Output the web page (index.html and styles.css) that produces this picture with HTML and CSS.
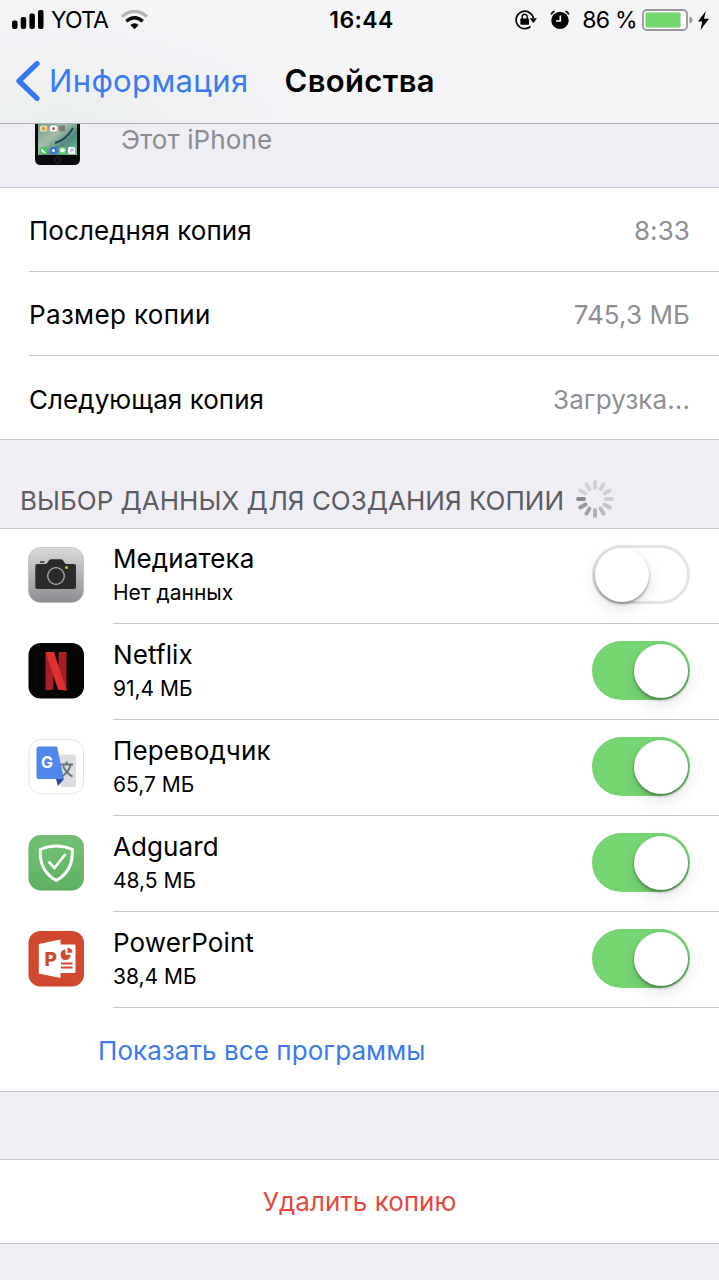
FILE: index.html
```html
<!DOCTYPE html>
<html lang="ru">
<head>
  <meta charset="UTF-8">
  <meta name="viewport" content="width=device-width, initial-scale=1.0">
  <title>Свойства</title>
  <link rel="stylesheet" href="styles.css">
</head>
<body>

<header class="top">
  <div class="status-bar">
    <div class="status-left">
      <svg class="signal" width="32" height="20" viewBox="0 0 32 20">
        <rect x="0" y="10.500" width="5.500" height="8.500" rx="2"/>
        <rect x="8.700" y="7" width="5.500" height="12" rx="2"/>
        <rect x="17.400" y="3.500" width="5.500" height="15.500" rx="2"/>
        <rect x="26" y="0" width="5.500" height="19" rx="2"/>
      </svg>
      <span class="carrier">YOTA</span>
      <svg class="wifi" width="27" height="20" viewBox="0 0 27 20">
        <path d="M1 6.500Q13.500 -4 26 6.500" fill="none" stroke="#b4b4b6" stroke-width="3.200"/>
        <path d="M5.300 11.300Q13.500 4.300 21.700 11.300" fill="none" stroke="#000" stroke-width="3.400"/>
        <path d="M9.300 15Q13.500 11.700 17.700 15L13.500 19.300Z"/>
      </svg>
    </div>
    <span class="clock">16:44</span>
    <div class="status-right">
      <svg class="lock" width="22" height="20" viewBox="0 0 22 20">
        <path d="M15.500 16.500A8.700 8.700 0 1 1 18.400 8.500" fill="none" stroke="#000" stroke-width="1.700"/>
        <path d="M14.700 8.300H22L18.400 13Z"/>
        <rect x="5.400" y="8.500" width="8.600" height="6.300" rx=".8"/>
        <path d="M7.200 9V6.700a2.500 2.500 0 0 1 5 0V9" fill="none" stroke="#000" stroke-width="1.400"/>
      </svg>
      <svg class="alarm" width="20" height="20" viewBox="0 0 20 20">
        <circle cx="10" cy="10.400" r="8.700"/>
        <path d="M1.200 4.500Q2 1.700 4.700 1.200M15.300 1.200Q18 1.700 18.800 4.500" fill="none" stroke="#000" stroke-width="1.600"/>
        <path d="M10.300 5.500V11H6" fill="none" stroke="#fff" stroke-width="1.600"/>
      </svg>
      <span class="percent">86 %</span>
      <svg class="battery" width="52" height="22" viewBox="0 0 52 22">
        <rect x="1" y="1" width="44" height="20" rx="4" fill="#fff" stroke="#98989a" stroke-width="1.800"/>
        <rect x="3.500" y="3.500" width="35" height="15" rx="1" fill="#72d86b"/>
        <path d="M47.500 7.500Q50.500 8.500 50.500 11T47.500 14.500Z" fill="#98989a"/>
      </svg>
      <svg class="bolt" width="11" height="19" viewBox="0 0 11 19">
        <path d="M7.800 0L0 10.500H4.300L2.500 19L11 7.700H6Z"/>
      </svg>
    </div>
  </div>
  <div class="nav-bar">
    <svg class="back" width="24" height="40" viewBox="0 0 24 40">
      <path d="M21 2.700L3 20L21 37.300" fill="none" stroke="#3577ee" stroke-width="5.300" stroke-linecap="round" stroke-linejoin="round"/>
    </svg>
    <a class="back-link">Информация</a>
    <h1 class="title">Свойства</h1>
  </div>
</header>

<main>
  <div class="device">
    <svg class="phone" width="46" height="43" viewBox="0 1 46 43">
      <defs>
        <linearGradient id="wall" x1="0" y1="0" x2="1" y2="1">
          <stop offset="0" stop-color="#6d9c8c"/>
          <stop offset=".4" stop-color="#a5bea6"/>
          <stop offset=".65" stop-color="#4f8a82"/>
          <stop offset="1" stop-color="#7fc596"/>
        </linearGradient>
      </defs>
      <path d="M0 0H45V36Q45 42 39 42H6Q0 42 0 36Z" fill="#0b0b0d"/>
      <rect x="3" y="0" width="39" height="32" fill="url(#wall)"/>
      <path d="M20 20Q31 17 38 5" fill="none" stroke="#1f4450" stroke-width="2"/>
      <rect x="5" y="2.500" width="7" height="6" rx="1.500" fill="#f0dfae"/>
      <circle cx="8.500" cy="5.500" r="2" fill="#e39a43"/>
      <rect x="15" y="2.500" width="7" height="6" rx="1.500" fill="#fff"/>
      <circle cx="18.500" cy="5.500" r="1.500" fill="#d94a50"/>
      <rect x="24" y="2.500" width="6" height="6" rx="1.500" fill="#7d7d79"/>
      <rect x="5" y="24" width="7" height="7" rx="1.500" fill="#4fc65f"/>
      <path d="M7 26Q7 29 10.500 29.500" fill="none" stroke="#fff" stroke-width="1.500"/>
      <rect x="15" y="24" width="7" height="7" rx="2" fill="#3778cf"/>
      <circle cx="18.500" cy="27.500" r="1.500" fill="#fff"/>
      <rect x="24" y="24" width="7" height="7" rx="1.500" fill="#55d764"/>
      <ellipse cx="27.500" cy="27.300" rx="2.500" ry="2" fill="#fff"/>
      <rect x="33" y="24" width="7" height="7" rx="1.500" fill="#fff"/>
      <path d="M36 29V26H38V28.500" fill="none" stroke="#a88acb" stroke-width="1"/>
      <circle cx="22.500" cy="37" r="3" fill="none" stroke="#303034" stroke-width="1"/>
    </svg>
    <span class="device-name">Этот iPhone</span>
  </div>

  <section class="group info">
    <div class="info-row">
      <span class="info-label">Последняя копия</span>
      <span class="info-value">8:33</span>
    </div>
    <div class="info-row size-row">
      <span class="info-label">Размер копии</span>
      <span class="info-value">745,3 МБ</span>
    </div>
    <div class="info-row">
      <span class="info-label">Следующая копия</span>
      <span class="info-value">Загрузка...</span>
    </div>
  </section>

  <div class="section-header">
    <h2>ВЫБОР ДАННЫХ ДЛЯ СОЗДАНИЯ КОПИИ</h2>
    <svg class="spinner" width="40" height="40" viewBox="-20 -20 40 40" stroke-width="3.800" stroke-linecap="round">
      <path d="M-11 0H-17" stroke="#89898e"/>
      <path d="M-11 0H-17" stroke="#97979c" transform="rotate(-30)"/>
      <path d="M-11 0H-17" stroke="#a1a1a6" transform="rotate(-60)"/>
      <path d="M-11 0H-17" stroke="#adadb2" transform="rotate(-90)"/>
      <path d="M-11 0H-17" stroke="#b9b9be" transform="rotate(-120)"/>
      <path d="M-11 0H-17" stroke="#c4c4c9" transform="rotate(-150)"/>
      <path d="M-11 0H-17" stroke="#cdcdd2" transform="rotate(180)"/>
      <path d="M-11 0H-17" stroke="#cfcfd4" transform="rotate(150)"/>
      <path d="M-11 0H-17" stroke="#cfcfd4" transform="rotate(120)"/>
      <path d="M-11 0H-17" stroke="#cfcfd4" transform="rotate(90)"/>
      <path d="M-11 0H-17" stroke="#cfcfd4" transform="rotate(60)"/>
      <path d="M-11 0H-17" stroke="#cfcfd4" transform="rotate(30)"/>
    </svg>
  </div>

  <section class="group apps">
    <div class="app">
      <svg class="app-icon" width="56" height="56" viewBox="0 0 56 56">
        <defs>
          <linearGradient id="cam" x1="0" y1="0" x2="0" y2="1">
            <stop offset="0" stop-color="#dadadc"/>
            <stop offset="1" stop-color="#8d8c91"/>
          </linearGradient>
        </defs>
        <rect x=".5" y=".5" width="55" height="55" rx="12" fill="url(#cam)" stroke="#b5b5b8" stroke-width=".6"/>
        <rect x="12" y="14.200" width="4.500" height="1.600" rx=".6" fill="#2b2b2c"/>
        <path d="M9 17H17.500Q19 17 20 14.800Q21 12.300 23 12.300H33Q35 12.300 36 14.800Q37 17 38.500 17H46Q48 17 48 19V40Q48 42 46 42H9Q7.300 42 7.300 40V19Q7.300 17 9 17Z" fill="#2b2b2c"/>
        <circle cx="28" cy="29" r="8.300" fill="none" stroke="#b2b2b5" stroke-width="1.300"/>
        <circle cx="38.500" cy="20.600" r="1.500" fill="#e2b93c"/>
      </svg>
      <div class="app-body">
        <div class="app-text">
          <div class="app-name">Медиатека</div>
          <div class="app-size">Нет данных</div>
        </div>
        <div class="toggle"><div class="knob"></div></div>
      </div>
    </div>

    <div class="app">
      <svg class="app-icon" width="56" height="56" viewBox="0 0 56 56">
        <rect x=".5" width="55.500" height="55.500" rx="12" fill="#050505"/>
        <path d="M17.500 9H25.500V46.500L17.500 47.500ZM30.500 9H38.500V47.500L30.500 46.500Z" fill="#a81e22"/>
        <path d="M17.500 9H26L38.500 47.500L30 46.500Z" fill="#e0302f"/>
      </svg>
      <div class="app-body">
        <div class="app-text">
          <div class="app-name">Netflix</div>
          <div class="app-size">91,4 МБ</div>
        </div>
        <div class="toggle on"><div class="knob"></div></div>
      </div>
    </div>

    <div class="app">
      <svg class="app-icon" width="56" height="56" viewBox="0 0 56 56">
        <rect x="1" y=".5" width="54.500" height="54.500" rx="12" fill="#fff" stroke="#e4e4e6"/>
        <path d="M29 15.500H45.500Q48 15.500 48 18V45.500Q48 48 45.500 48H33Z" fill="#dcdddf"/>
        <path d="M28 40H36L30 47Z" fill="#3447a5"/>
        <path d="M10.500 7.500H29L36 40H10.500Q8.500 40 8.500 38V10Q8.500 7.500 10.500 7.500Z" fill="#4f87ec"/>
        <text class="translate-letter" x="13" y="29">G</text>
        <path d="M32.500 25.500H45M38.700 22.500V25.500M42.500 26Q40.500 34 33.500 37.500M35 27Q38.500 34.500 44.500 37.500" fill="none" stroke="#66757c" stroke-width="1.900"/>
      </svg>
      <div class="app-body">
        <div class="app-text">
          <div class="app-name">Переводчик</div>
          <div class="app-size">65,7 МБ</div>
        </div>
        <div class="toggle on"><div class="knob"></div></div>
      </div>
    </div>

    <div class="app">
      <svg class="app-icon" width="56" height="56" viewBox="0 0 56 56">
        <defs>
          <linearGradient id="shield" x1="0" y1="0" x2="0" y2="1">
            <stop offset="0" stop-color="#72c172"/>
            <stop offset="1" stop-color="#5fb262"/>
          </linearGradient>
        </defs>
        <rect x=".8" y=".3" width="54.900" height="54.900" rx="12" fill="url(#shield)" stroke="#5aa85c" stroke-width=".6"/>
        <path d="M28.300 11Q36.500 11 44.300 14.500Q45.500 36 28.300 45.500Q11 36 12.300 14.500Q20 11 28.300 11Z" fill="none" stroke="#fff" stroke-width="3"/>
        <path d="M20.500 26.500L26.500 33L37.500 19" fill="none" stroke="#fff" stroke-width="2.700"/>
      </svg>
      <div class="app-body">
        <div class="app-text">
          <div class="app-name">Adguard</div>
          <div class="app-size">48,5 МБ</div>
        </div>
        <div class="toggle on"><div class="knob"></div></div>
      </div>
    </div>

    <div class="app">
      <svg class="app-icon" width="56" height="56" viewBox="0 0 56 56">
        <rect x=".5" width="55.500" height="55.500" rx="12" fill="#d0482e"/>
        <rect x="30" y="13.500" width="17.500" height="28.500" rx="1" fill="#fff"/>
        <path d="M37.500 18.500A5.200 5.200 0 1 0 42.700 23.700H37.500Z" fill="#d0482e"/>
        <path d="M39.500 16.800A5 5 0 0 1 44.500 21.800H39.500Z" fill="#d0482e"/>
        <path d="M33 32.500H44.500M33 36.500H44.500" stroke="#d0482e" stroke-width="1.800"/>
        <path d="M10.800 13L32.500 8.500V47L10.800 42.500Z" fill="#fff"/>
        <text class="ppt-letter" x="16.500" y="34.500">P</text>
      </svg>
      <div class="app-body">
        <div class="app-text">
          <div class="app-name">PowerPoint</div>
          <div class="app-size">38,4 МБ</div>
        </div>
        <div class="toggle on"><div class="knob"></div></div>
      </div>
    </div>

    <a class="show-all">Показать все программы</a>
  </section>

  <section class="group delete">
    <a>Удалить копию</a>
  </section>
</main>

</body>
</html>
```
FILE: styles.css
```css
/* Basic Page Styling */
* {
  box-sizing: border-box;
}

body {
  width: 719px;
  height: 1280px;
  margin: 0;
  overflow: hidden;
  background-color: #efeef5;
  color: #000;
  font-family: Inter, "Liberation Sans", sans-serif;
  font-size: 26px;
  white-space: nowrap;
}

svg {
  display: block;
  flex: none;
}

/* Status and navigation bars */
.top {
  height: 124px;
  border-bottom: 1px solid #adadb2;
  background: radial-gradient(ellipse 300px 130px at 60px 124px, #ebeeef, #f5f5f8);
}

.status-bar {
  display: grid;
  grid-template-columns: 1fr auto 1fr;
  height: 40px;
  padding: 0 10px 0 12px;
  align-items: center;
}

.status-left,
.status-right {
  display: flex;
  align-items: center;
}

.status-right {
  justify-content: flex-end;
}

.carrier {
  margin: 0 13px 0 7px;
  font-size: 23px;
  letter-spacing: -0.9px;
}

.clock {
  padding-left: 2px;
  font-size: 23px;
  font-weight: 600;
  letter-spacing: 0.4px;
}

.percent {
  margin: 0 5px 0 12px;
  font-size: 23px;
  letter-spacing: -0.7px;
}

.alarm {
  margin-left: 13px;
}

.bolt {
  margin-left: 4px;
}

.nav-bar {
  display: flex;
  align-items: center;
  height: 81px;
  padding-left: 16px;
}

.back-link {
  margin-left: 9px;
  color: #3b7bee;
  font-size: 31px;
  letter-spacing: 0.35px;
}

.title {
  margin: 0 0 0 36px;
  font-size: 31px;
  font-weight: 600;
  letter-spacing: 0.35px;
}

/* Device row */
.device {
  display: flex;
  height: 63px;
  padding-left: 35px;
}

.device-name {
  margin-left: 40px;
  color: #8b8b90;
  line-height: 32px;
  letter-spacing: 0.1px;
}

/* White groups */
.group {
  border-top: 1px solid #c8c7cc;
  border-bottom: 1px solid #c8c7cc;
  background-color: #fff;
}

.info {
  padding-left: 29px;
}

.info-row {
  display: flex;
  justify-content: space-between;
  height: 84px;
  padding-right: 29px;
  border-bottom: 1px solid #c8c7cc;
  line-height: 86px;
}

.info-row:last-child {
  height: 83px;
  border-bottom: none;
  line-height: 88px;
}

.info-label {
  letter-spacing: 0.05px;
}

.size-row .info-label {
  letter-spacing: 0.35px;
}

.info-value {
  color: #8e8e93;
  letter-spacing: 0.1px;
}

.section-header {
  display: flex;
  height: 88px;
  padding: 38px 0 0 20px;
}

.section-header h2 {
  margin: 0 11px 0 0;
  color: #5c5c61;
  font-size: 26px;
  font-weight: 400;
  line-height: 45px;
}

.spinner {
  margin-top: 1px;
}

/* App list */
.app {
  display: flex;
  height: 96px;
  padding-left: 28px;
}

.app:first-child {
  height: 95px;
}

.app-icon {
  margin-top: 19px;
}

.app:first-child .app-icon {
  margin-top: 18px;
}

.app-body {
  display: flex;
  flex: 1;
  justify-content: space-between;
  margin-left: 29px;
  padding: 14px 29px 0 0;
  border-bottom: 1px solid #c8c7cc;
}

.app:first-child .app-body {
  padding-top: 13px;
}

.app-name {
  line-height: 34px;
  letter-spacing: 0.1px;
}

.app-size {
  font-size: 21px;
  line-height: 33px;
}

.ppt-letter {
  fill: #d0482e;
  font-size: 19px;
  font-weight: 800;
}

.translate-letter {
  fill: #fff;
  font-size: 16px;
  font-weight: 700;
}

/* Switches */
.toggle {
  width: 98px;
  height: 59px;
  margin-top: 3px;
  border: 3px solid #e4e4e5;
  border-radius: 30px;
}

.toggle.on {
  border-color: #76d672;
  background-color: #76d672;
}

.knob {
  width: 54px;
  height: 54px;
  border-radius: 50%;
  background-color: #fff;
  box-shadow: 0 2px 3px rgba(0, 0, 0, 0.35), 0 6px 16px rgba(0, 0, 0, 0.12);
}

.on .knob {
  margin-left: 39px;
}

/* Links */
.show-all {
  display: block;
  height: 83px;
  padding-left: 98px;
  color: #3b7bee;
  line-height: 86px;
  letter-spacing: 0.07px;
}

.delete {
  height: 85px;
  margin-top: 67px;
  color: #e5493d;
  line-height: 84px;
  text-align: center;
}
```
